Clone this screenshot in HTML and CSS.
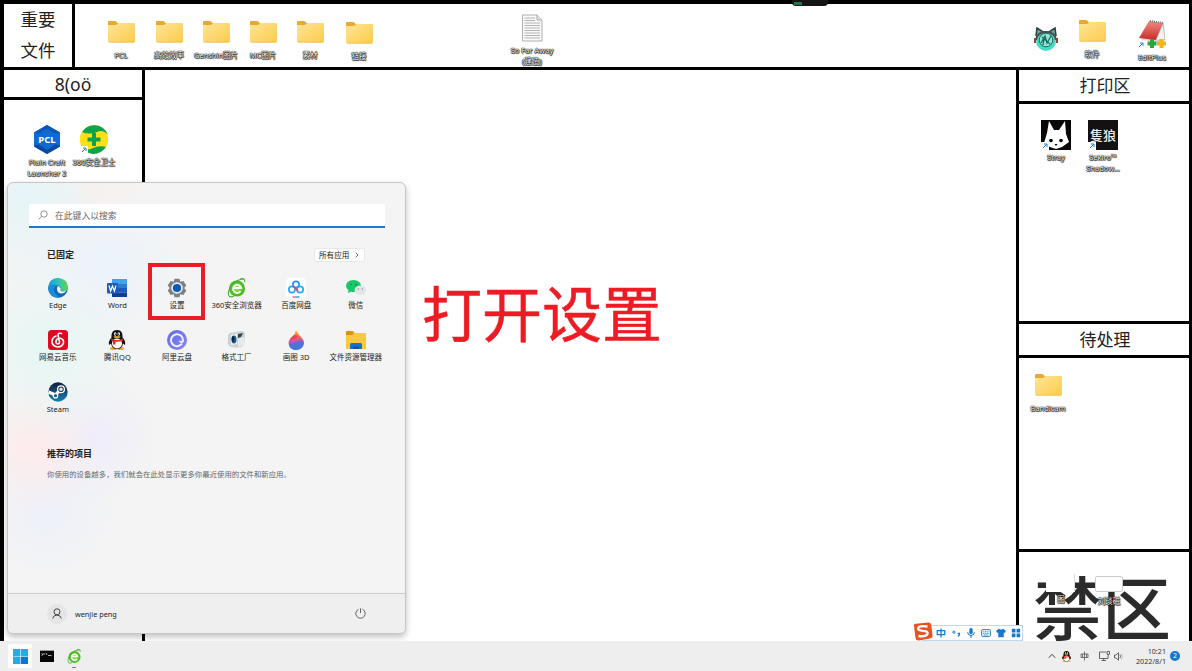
FILE: index.html
```html
<!DOCTYPE html>
<html lang="zh-CN">
<head>
<meta charset="utf-8">
<title>桌面</title>
<link rel="stylesheet" href="styles.css">
</head>
<body>
<svg class="defs" width="0" height="0" aria-hidden="true">
  <defs>
    <linearGradient id="gFolder" x1="0" y1="0" x2="1" y2="1"><stop offset="0" stop-color="#ffe596"/><stop offset="1" stop-color="#fccb4c"/></linearGradient>
    <linearGradient id="gEdge" x1="0" y1="0" x2="1" y2="0"><stop offset="0" stop-color="#1c9bdc"/><stop offset=".5" stop-color="#2cc3b8"/><stop offset="1" stop-color="#64d44e"/></linearGradient>
    <linearGradient id="gPurple" x1="0" y1="0" x2="1" y2="1"><stop offset="0" stop-color="#5d6ceb"/><stop offset="1" stop-color="#8d85f3"/></linearGradient>
    <linearGradient id="gDrop" x1="0" y1="0" x2="0" y2="1"><stop offset="0" stop-color="#ffd02e"/><stop offset=".3" stop-color="#fb6a3c"/><stop offset=".6" stop-color="#c24fc8"/><stop offset="1" stop-color="#2a8fe8"/></linearGradient>
    <linearGradient id="gSteam" x1="0" y1="0" x2="0" y2="1"><stop offset="0" stop-color="#141a3a"/><stop offset="1" stop-color="#1684b8"/></linearGradient>
    <linearGradient id="gRed" x1="0" y1="0" x2="0" y2="1"><stop offset="0" stop-color="#f08a80"/><stop offset="1" stop-color="#c9292b"/></linearGradient>
    <radialGradient id="gGreen"><stop offset="0" stop-color="#9be04a"/><stop offset="1" stop-color="#41b51f"/></radialGradient>
    <symbol id="folder" viewBox="0 0 27 22">
      <path d="M1 0H7Q8.500 0 10 2.500H14V8H0V1Q0 0 1 0Z" fill="#e9a82f"/>
      <path d="M0 4H8L10.500 2H26Q27 2 27 3V20.500Q27 21.500 26 21.500H1Q0 21.500 0 20.500Z" fill="url(#gFolder)"/>
      <path d="M1 21.200H26" stroke="#e8b33e" stroke-width=".6"/>
    </symbol>
    <symbol id="link" viewBox="0 0 8 8"><path d="M0 0H8V8H0Z" fill="#fff"/><path d="M2 6L5.800 2.200M3 2H6V5" stroke="#2484cf" fill="none"/></symbol>
    <symbol id="ie360" viewBox="0 0 20 20">
      <circle cx="10" cy="10.500" r="8" fill="url(#gGreen)"/>
      <path d="M13.500 13A4 4 0 1 1 14 10H6.500" fill="none" stroke="#f6fff0" stroke-width="2"/>
      <path d="M17.500 1Q10 .5 4 8Q-.5 15 2.500 18.500Q4 19.500 7 18M13 1Q18.500-.5 17.500 4" fill="none" stroke="#4aae38" stroke-width="1.100"/>
    </symbol>
    <symbol id="qq" viewBox="0 0 20 20">
      <ellipse cx="6.500" cy="18.500" rx="3.500" ry="1.500" fill="#f6a51b"/><ellipse cx="13.500" cy="18.500" rx="3.500" ry="1.500" fill="#f6a51b"/>
      <path d="M10 0C5.500 0 4.200 3.500 4.500 7.500Q1 11 2 15L4 13.500Q5 19 10 19Q15 19 16 13.500L18 15Q19 11 15.500 7.500C15.800 3.500 14.500 0 10 0Z" fill="#111"/>
      <ellipse cx="10" cy="13.500" rx="5" ry="5" fill="#fff"/>
      <ellipse cx="8.200" cy="4" rx="1.200" ry="1.700" fill="#fff"/><ellipse cx="11.800" cy="4" rx="1.200" ry="1.700" fill="#fff"/>
      <circle cx="8.500" cy="4.200" r=".6"/><circle cx="11.500" cy="4.200" r=".6"/>
      <ellipse cx="10" cy="7" rx="3.400" ry="1.100" fill="#f6a51b"/>
      <path d="M4 8.500Q10 11.500 16 8.500V10.500Q12 12.300 8.500 11.700V14.500H6V11Q4.500 10.600 4 10Z" fill="#e62a26"/>
    </symbol>
  </defs>
</svg>

<div class="screen">
  <div class="wallpaper">
    <div class="top-row">
      <div class="cell important"><span>重要</span><span>文件</span></div>
      <div class="cell"></div>
    </div>
    <div class="columns">
      <div class="column">
        <div class="cell heading heading-left">8(oö</div>
        <div class="cell grow"></div>
      </div>
      <div class="cell middle"></div>
      <div class="column">
        <div class="cell heading heading-right">打印区</div>
        <div class="cell print"></div>
        <div class="cell heading heading-right">待处理</div>
        <div class="cell pending"></div>
        <div class="cell forbidden">禁区</div>
      </div>
    </div>
  </div>

  <div class="recorder"><i></i></div>

  <!-- Freely placed desktop shortcuts -->
  <div class="shortcut" style="left:91px;top:21px"><svg class="folder"><use href="#folder"/></svg><b class="low">PCL</b></div>
  <div class="shortcut" style="left:139px;top:21px"><svg class="folder"><use href="#folder"/></svg><b class="low">高效效率</b></div>
  <div class="shortcut" style="left:186px;top:21px"><svg class="folder"><use href="#folder"/></svg><b class="low">Genshin图片</b></div>
  <div class="shortcut" style="left:233px;top:21px"><svg class="folder"><use href="#folder"/></svg><b class="low">MC图片</b></div>
  <div class="shortcut" style="left:280px;top:21px"><svg class="folder"><use href="#folder"/></svg><b class="low">素材</b></div>
  <div class="shortcut" style="left:329px;top:22px"><svg class="folder"><use href="#folder"/></svg><b class="low">链接</b></div>
  <div class="shortcut" style="left:502px;top:14px">
    <svg width="21" height="28" viewBox="0 0 21 28"><path d="M.5 1H15L20 6V27H.5Z" fill="#fafafa" stroke="#999" stroke-width=".8"/><path d="M15 1V6H20" fill="#e5e5e5" stroke="#999" stroke-width=".8"/><path d="M2.500 4H13M2.500 6.500H13M2.500 9H18M2.500 11.500H18M2.500 14H18M2.500 16.500H18M2.500 19H18M2.500 21.500H18M2.500 24H18" stroke="#aaa" stroke-width=".9"/></svg>
    <b class="file">So Far Away<br>(建造)</b>
  </div>
  <div class="shortcut" style="left:1016px;top:27px">
    <svg width="24" height="25" viewBox="0 0 24 25"><circle cx="12" cy="14" r="10" fill="#45dcc2"/><path d="M2 9L3 1L9 5H15L21 1L22 9" fill="#46bda6" stroke="#383d42" stroke-width="1.600"/><path d="M2 13Q3 5 12 5Q21 5 22 13" fill="none" stroke="#504d50" stroke-width="2"/><circle cx="12" cy="13" r="6.800" fill="#8de9d4" stroke="#176a68"/><path d="M7 16L11 9L13 16L17 9M8 10L16 17M9 18L10 12" fill="none" stroke="#216765" stroke-width="1.300"/><path d="M1 11V16M23 11V16" stroke="#8c4538" stroke-width="2"/></svg>
  </div>
  <div class="shortcut" style="left:1062px;top:20px"><svg class="folder"><use href="#folder"/></svg><b class="low">软件</b></div>
  <div class="shortcut" style="left:1122px;top:20px">
    <svg width="30" height="30" viewBox="0 0 30 30"><path d="M12 1L27 3L28 20L22 22L4 20Z" fill="#d7d9dc"/><path d="M12 1L26 3L19 20L2 18Z" fill="url(#gRed)"/><path d="M13 1L27 3" stroke="#777" stroke-width="2" stroke-dasharray="1 1"/><path d="M26 4L19 20L28 20Z" fill="#f4f4f4" stroke="#999" stroke-width=".5"/><path d="M15 19V28M10.500 23.500H19.500" stroke="#2ca63a" stroke-width="4"/><path d="M24.500 19V28M20 23.500H29" stroke="#f0b51c" stroke-width="4"/><use href="#link" x="0" y="21" width="8" height="8"/></svg>
    <b class="tight">EditPlus</b>
  </div>
  <div class="shortcut" style="left:17px;top:124px">
    <svg width="30" height="31" viewBox="0 0 30 31"><path d="M15 1L28 8.500V22.500L15 30L2 22.500V8.500Z" fill="#0d6bd3"/><path d="M15 1L28 8.500L24 10L15 5L6 10L2 8.500Z" fill="#0b57b5"/><path d="M2 22.500L6 20L15 26L24 20L28 22.500L15 30Z" fill="#094a9e"/><text x="15" y="19" class="pcl">PCL</text></svg>
    <b>Plain Craft<br>Launcher 2</b>
  </div>
  <div class="shortcut" style="left:64px;top:124px">
    <svg width="30" height="31" viewBox="0 0 30 31"><circle cx="15" cy="15.500" r="14.200" fill="#ffdf16"/><path d="M3 8Q8 1 15 1.200Q25 1 29 11Q24 5 18 8Q11 11 3 8Z" fill="#0ca34a"/><path d="M1.500 21Q8 28 14 24Q20 21 27 23Q22 30 14 30Q5 29 1.500 21Z" fill="#0ca34a"/><path d="M15 9V22M8.500 15.500H21.500" stroke="#0ca34a" stroke-width="4"/><use href="#link" x="1" y="22" width="8" height="8"/></svg>
    <b>360安全卫士</b>
  </div>
  <div class="shortcut" style="left:1026px;top:120px">
    <svg width="30" height="30" viewBox="0 0 30 30"><path d="M0 0H30V30H0Z" fill="#080808"/><path d="M8 1L13 10H18L24 1L25 14L28 22L21 27L15 29L9 27L3 23L6 13Z" fill="#fff"/><circle cx="10" cy="20.500" r="1.800"/><circle cx="20" cy="20.500" r="1.800"/><path d="M13.500 24H16.500L15 26Z"/><use href="#link" x="0" y="22" width="8" height="8"/></svg>
    <b>Stray</b>
  </div>
  <div class="shortcut" style="left:1073px;top:120px">
    <svg width="30" height="30" viewBox="0 0 30 30"><path d="M0 0H30V30H0Z" fill="#131111"/><text x="15" y="20" class="sekiro">隻狼</text><use href="#link" x="0" y="22" width="8" height="8"/></svg>
    <b>Sekiro™<br>Shadow...</b>
  </div>
  <div class="shortcut" style="left:1018px;top:374px"><svg class="folder"><use href="#folder"/></svg><b class="low">Bandicam</b></div>
  <div class="shortcut" style="left:1031px;top:574px"><div class="blank-icon"></div><b class="tight">图</b></div>
  <div class="shortcut" style="left:1079px;top:576px"><div class="disk-icon"></div><b class="disk-label">刘琰磁</b></div>

  <div class="caption">打开设置</div>

  <div class="ime">
    <svg class="sogou" width="20" height="19" viewBox="0 0 20 19"><path d="M1 4Q0 2 3 1.800L15 .5Q18 0 18.300 3L19.500 13Q20 16 17 16.500L6 18.500Q3 19 2.500 16Z" fill="#e95322"/><path d="M14.500 4.500Q6 3 5 6.500Q5 8.500 10 8.800Q15.500 9 14.500 12Q13 15 5.500 14" fill="none" stroke="#fff" stroke-width="2.300"/></svg>
    <svg viewBox="0 0 12 12"><path d="M1.500 3H10.500V7.800H1.500ZM6 .5V11.500" fill="none" stroke="#1677d2" stroke-width="1.500"/></svg>
    <svg viewBox="0 0 12 12"><circle cx="3.500" cy="5" r="1.300" fill="none" stroke="#1677d2" stroke-width="1.200"/><path d="M8 6.500H10V8L8.500 10" stroke="#1677d2" fill="none" stroke-width="1.600"/></svg>
    <svg viewBox="0 0 12 12"><rect x="4" y="0" width="4" height="7.500" rx="2" fill="#1677d2"/><path d="M2 5Q2 9 6 9Q10 9 10 5M6 9V12" stroke="#1677d2" fill="none" stroke-width="1.200"/></svg>
    <svg viewBox="0 0 12 12"><rect x=".8" y="2" width="10.400" height="8" rx="1" fill="none" stroke="#1677d2" stroke-width="1.200"/><path d="M2.500 4.500H9.500M2.500 6.500H9.500M3.500 8.300H8.500" stroke="#1677d2" stroke-dasharray="1.500 .6"/></svg>
    <svg viewBox="0 0 12 12"><path d="M3.500 1Q6 3 8.500 1L12 3.500L10.500 6L9.300 5.500V11H2.700V5.500L1.500 6L0 3.500Z" fill="#1677d2"/></svg>
    <svg viewBox="0 0 12 12"><path d="M1 1H5.300V5.300H1ZM6.700 1H11V5.300H6.700ZM1 6.700H5.300V11H1ZM6.700 6.700H11V11H6.700Z" fill="#1677d2"/></svg>
  </div>

  <div class="start-menu">
    <div class="menu-body">
      <div class="search">
        <svg width="10" height="10" viewBox="0 0 10 10"><circle cx="6" cy="4" r="3.200" fill="none" stroke="#777" stroke-width=".8"/><path d="M3.700 6.300L.6 9.400" stroke="#777" stroke-width=".8"/></svg>
        <span>在此键入以搜索</span>
      </div>
      <div class="section-head"><h2>已固定</h2><div class="all-apps"><span>所有应用</span><svg width="4" height="6" viewBox="0 0 4 6"><path d="M.8 .8L3 3L.8 5.200" fill="none" stroke="#555" stroke-width=".9"/></svg></div></div>
      <div class="apps">
        <div class="app"><svg viewBox="0 0 20 20"><circle cx="10" cy="10" r="9.800" fill="#1267bd"/><path d="M.3 9Q1 .3 10 .2Q19.500 .5 19.800 9Q19.500 13.500 14.500 13.500Q11.500 13.200 12.500 11.500Q13.500 8.500 9.500 7.200Q4 5.800 .3 9Z" fill="url(#gEdge)"/><path d="M.3 9Q4 5.800 9.500 7.200Q4 9.500 7 15Q9 18 12 19.500Q3 21 .3 12Z" fill="#198cda"/><path d="M9.500 8Q13.200 9 12.500 11.500Q11.500 13.200 14.500 13.500Q17 13.500 18.500 12Q17 15.500 13 15.500Q7.500 14.500 9.500 8Z" fill="#f4f8fa"/></svg><span>Edge</span></div>
        <div class="app"><svg viewBox="0 0 20 20"><path d="M5 1H20V7H5Z" fill="#41a5ee"/><path d="M5 6H20V10H5Z" fill="#2b7cd3"/><path d="M5 10H20V14.500H5Z" fill="#185abd"/><path d="M5 14.500H20V19H5Z" fill="#103f91"/><rect x="0" y="5" width="11" height="10.500" rx="1" fill="#185abd"/><path d="M2 7.500L3.600 13L5.500 8L7.400 13L9 7.500" stroke="#fff" stroke-width="1.300" fill="none"/></svg><span>Word</span></div>
        <div class="app"><svg viewBox="0 0 20 20"><path d="M7.500 .7H12.500L13.300 3.800L16.400 2.900L19.300 7.500L17.200 10L19.300 12.500L16.400 17.100L13.300 16.200L12.500 19.300H7.500L6.700 16.200L3.600 17.100L.7 12.500L2.800 10L.7 7.500L3.600 2.900L6.700 3.800Z" fill="#7b8086"/><circle cx="10" cy="10" r="5.800" fill="#ebeff4"/><circle cx="10" cy="10" r="4.100" fill="#0c5bae"/></svg><span>设置</span></div>
        <div class="app"><svg viewBox="0 0 20 20"><use href="#ie360"/></svg><span>360安全浏览器</span></div>
        <div class="app"><svg viewBox="0 0 20 20"><rect width="20" height="20" rx="4" fill="#fff"/><circle cx="10" cy="6.500" r="3.100" fill="none" stroke="#189cf2" stroke-width="1.700"/><circle cx="5.900" cy="11.500" r="3.100" fill="none" stroke="#26aaf5" stroke-width="1.700"/><circle cx="14.100" cy="11.500" r="3.100" fill="none" stroke="#26aaf5" stroke-width="1.700"/><path d="M7 8Q9 10 12 13" stroke="#f04452" stroke-width="1.700" fill="none"/><path d="M6.500 19H10" stroke="#f36070" stroke-width="1.400"/><path d="M10 19H13.500" stroke="#2698ee" stroke-width="1.400"/></svg><span>百度网盘</span></div>
        <div class="app"><svg viewBox="0 0 20 20"><path d="M7.500 2C3 2 0 4.800 0 8Q0 10.500 2.500 12.500L2 15L5 13.700Q13 15 15 9C15.500 5 12 2 7.500 2Z" fill="#18c86a"/><path d="M14 7.500Q19.700 7.800 20 12Q20 14 18.300 15.500L18.500 17.500L16.500 16.500Q9 17.500 8.500 12Q9 8 14 7.500Z" fill="#e4e5e6"/><circle cx="5" cy="6.500" r=".8" fill="#07793a"/><circle cx="10" cy="6.500" r=".8" fill="#07793a"/><circle cx="12.300" cy="11" r=".7" fill="#888"/><circle cx="16.300" cy="11" r=".7" fill="#888"/></svg><span>微信</span></div>
        <div class="app"><svg viewBox="0 0 20 20"><rect width="20" height="20" rx="3.500" fill="#dd0a22"/><path d="M13.500 3.500Q10 2.500 10 5L11.500 12Q11.500 14 9.800 14Q7.500 13.500 8 11Q9 8.200 12 8.300Q16 9 15.500 13Q14 17 9.500 17Q4 16 4 11.500Q4.200 7.500 8 6" fill="none" stroke="#fff" stroke-width="1.600" stroke-linecap="round"/></svg><span>网易云音乐</span></div>
        <div class="app"><svg viewBox="0 0 20 20"><use href="#qq"/></svg><span>腾讯QQ</span></div>
        <div class="app"><svg viewBox="0 0 20 20"><circle cx="10" cy="10" r="10" fill="url(#gPurple)"/><path d="M14.500 14.200A6 6 0 1 1 16 10.500Q15.500 13 13 11.500" fill="none" stroke="#f4f2ff" stroke-width="2" stroke-linecap="round"/></svg><span>阿里云盘</span></div>
        <div class="app"><svg viewBox="0 0 20 20"><path d="M1 5Q2 2 6 2.500L14 1Q18 1 18 5L17 15Q14 18 9 17.500Q3 18 1 14Z" fill="#cbd0d4"/><path d="M4 5L10 4V14L4 15Z" fill="#f2f4f5"/><ellipse cx="7" cy="9.500" rx="2.500" ry="4" fill="#176093"/><ellipse cx="6" cy="9" rx="1.400" ry="3" fill="#0a263f"/><path d="M11 4L16 3L14 7L11 8Z" fill="#3c4043"/><path d="M11 9L17 7V15L11 17Z" fill="#e8eaeb"/></svg><span>格式工厂</span></div>
        <div class="app"><svg viewBox="0 0 20 20"><path d="M10 0Q12 4 15 7Q19 11 17.500 15Q15 20 10 20Q3 20 2.500 13Q3 9 7 6Q9 4 10 0Z" fill="url(#gDrop)"/><path d="M4 9Q10 10 12 6L8 5Z" fill="#e5475a"/><path d="M3 14Q9 14 12 11Q16 9 18 13Q17 20 10 20Q5 20 3 14Z" fill="#3976dd" opacity=".7"/></svg><span>画图 3D</span></div>
        <div class="app"><svg viewBox="0 0 20 20"><path d="M0 2Q0 1 1 1H7L9 3H19Q20 3 20 4V18Q20 19 19 19H1Q0 19 0 18Z" fill="#fdc83b"/><path d="M0 2Q0 1 1 1H7L8 3L6 5H0Z" fill="#d99317"/><path d="M4 19V14.500Q4 13 5.500 13H14.500Q16 13 16 14.500V19Z" fill="#1772c4"/><path d="M7 19V16.500H13V19" fill="#0c559d"/></svg><span>文件资源管理器</span></div>
        <div class="app"><svg viewBox="0 0 20 20"><circle cx="10" cy="10" r="9.700" fill="url(#gSteam)"/><path d="M.5 10L7.500 13L11.500 8.500" fill="none" stroke="#fff" stroke-width="3.300"/><circle cx="13" cy="7.200" r="3.400" fill="#17284c" stroke="#fff" stroke-width="1.300"/><circle cx="13" cy="7.200" r="1.800" fill="#dce7ef"/><circle cx="7.500" cy="13.700" r="2.200" fill="#1c6595" stroke="#fff" stroke-width="1.200"/></svg><span>Steam</span></div>
      </div>
      <h2 class="recommended">推荐的项目</h2>
      <p class="hint">你使用的设备越多，我们就会在此处显示更多你最近使用的文件和新应用。</p>
    </div>
    <div class="menu-foot">
      <div class="user"><div class="avatar"><svg width="10" height="11" viewBox="0 0 10 11"><circle cx="5" cy="3.800" r="3" fill="none" stroke="#444"/><path d="M.7 10.500Q1.500 7 5 7Q8.500 7 9.300 10.500" fill="none" stroke="#444"/></svg></div><span>wenjie peng</span></div>
      <svg width="11" height="11" viewBox="0 0 11 11"><path d="M3.500 1.300A4.700 4.700 0 1 0 7.500 1.300M5.500 .3V5" fill="none" stroke="#555" stroke-width=".9"/></svg>
    </div>
  </div>
  <div class="highlight"></div>

  <div class="taskbar">
    <div class="pinned">
      <div class="task active"><svg width="15" height="15" viewBox="0 0 15 15"><path d="M0 0H7.200V7.200H0ZM7.800 0H15V7.200H7.800ZM0 7.800H7.200V15H0Z" fill="#28aae8"/><path d="M7.800 7.800H15V15H7.800Z" fill="#0878d0"/></svg></div>
      <div class="task"><svg width="14" height="12" viewBox="0 0 14 12"><path d="M0 0H14V12H0Z" fill="#080808"/><path d="M0 0H14V1H0Z" fill="#999"/><path d="M1.500 3.500L3 4.500L1.500 5.500M4 3V5M6 3L7 5M8 5.500H11.500" fill="none" stroke="#ddd" stroke-width=".8"/></svg></div>
      <div class="task running"><svg width="15" height="15" viewBox="0 0 20 20"><use href="#ie360"/></svg></div>
    </div>
    <div class="tray">
      <svg width="8" height="6" viewBox="0 0 8 6"><path d="M.8 4.800L4 1.300L7.200 4.800" fill="none" stroke="#333" stroke-width=".9"/></svg>
      <svg class="tray-qq" width="11" height="11" viewBox="0 0 20 20"><use href="#qq"/></svg>
      <svg class="tray-ime" width="9" height="10" viewBox="0 0 9 10"><path d="M1 3H8V6.500H1ZM4.500 .5V9.500M2.500 3V6.500M6.500 3V6.500" fill="none" stroke="#555" stroke-width=".8"/></svg>
      <svg class="tray-net" width="11" height="10" viewBox="0 0 11 10"><path d="M7 1H.5V7.500H9V5M2.500 9.500H7M4.700 7.500V9.500M8 .5H10.500V3.300H8ZM9.200 3.300V5" fill="none" stroke="#444" stroke-width=".8"/></svg>
      <svg class="tray-vol" width="9" height="9" viewBox="0 0 9 9"><path d="M.5 3H2L4.500 .8V8.200L2 6H.5ZM6 2.800Q7 4.500 6 6.200" fill="none" stroke="#444" stroke-width=".8"/><path d="M7.500 1.500Q9 4.500 7.500 7.500" fill="none" stroke="#aaa" stroke-width=".7"/></svg>
      <div class="clock"><span>10:21</span><span>2022/8/1</span></div>
      <div class="badge">2</div>
    </div>
  </div>
</div>
</body>
</html>
```
FILE: styles.css
```css
* { box-sizing: border-box; }
body {
  margin: 0;
  overflow: hidden;
  font-family: "Noto Sans", "Noto Sans CJK SC", sans-serif;
  color: #222;
}
svg { display: block; flex: none; }
.defs { position: absolute; }
.screen {
  position: relative;
  width: 1192px;
  height: 671px;
  display: flex;
  flex-direction: column;
  overflow: hidden;
}

/* Wallpaper divided into labelled zones */
.wallpaper {
  height: 641px;
  padding: 4px 3px 0 4px;
  display: flex;
  flex-direction: column;
  gap: 3px;
  background: #000;
}
.top-row { height: 63px; display: grid; grid-template-columns: 68px 1fr; gap: 3px; }
.columns { flex: 1; min-height: 0; display: grid; grid-template-columns: 138px 1fr 170px; gap: 3px; }
.column { display: flex; flex-direction: column; gap: 3px; min-height: 0; }
.cell { background: #fff; }
.grow { flex: 1; }
.important {
  display: flex;
  flex-direction: column;
  align-items: center;
  font-size: 17.5px;
  line-height: 31px;
}
.heading { display: flex; align-items: center; justify-content: center; font-size: 17px; line-height: 24px; flex: none; }
.heading-left { height: 27px; font-size: 17.5px; }
.heading-right { height: 31px; padding-left: 2px; }
.print { height: 217px; }
.pending { height: 191px; }
.forbidden {
  flex: 1;
  min-height: 0;
  padding: 16px 0 0 14px;
  font: 500 69px/74px "Noto Sans CJK SC", sans-serif;
  color: #2b2b2b;
  white-space: nowrap;
}
.recorder {
  position: absolute;
  left: 792px;
  top: 0;
  width: 36px;
  height: 6px;
  border-radius: 0 0 4px 4px;
  padding: 2px;
  background: #151515;
}
.recorder i { display: block; width: 8px; height: 3px; background: #23764a; }

/* Desktop shortcuts */
.shortcut { position: absolute; width: 60px; display: flex; flex-direction: column; align-items: center; }
.folder { width: 27px; height: 22px; }
.shortcut b {
  margin-top: 2px;
  font-size: 7.5px;
  line-height: 11px;
  font-weight: 400;
  text-align: center;
  white-space: nowrap;
  color: #fff;
  text-shadow: 0 0 1px #000, 0 0 1px #000, 0 0 1px #000, .5px .5px 1px #000;
}
.shortcut .low { margin-top: 6.5px; }
.shortcut .file { margin-top: 3px; }
.shortcut .tight { margin-top: 2px; }
.pcl { font: 700 9.5px "Noto Sans", sans-serif; fill: #fff; text-anchor: middle; }
.sekiro { font: 500 13px "Noto Sans CJK SC", sans-serif; fill: #eee; text-anchor: middle; }
.blank-icon { width: 29px; height: 18px; margin-left: -1px; background: #fff; border-right: 1px solid #ddd; }
.disk-icon { width: 28px; height: 16px; border: 1px solid #ccc; border-radius: 2px; background: #fff; }
.shortcut .disk-label { margin-top: 4px; }

.caption {
  position: absolute;
  left: 422px;
  top: 267px;
  font: 400 60px/88px "Noto Sans CJK SC", sans-serif;
  color: #ed1c24;
  -webkit-text-stroke: .5px #ed1c24;
  white-space: nowrap;
}

/* Floating input-method bar */
.ime {
  position: absolute;
  left: 922px;
  top: 625px;
  width: 101px;
  height: 16px;
  padding: 0 1px 0 13px;
  display: flex;
  align-items: center;
  justify-content: space-between;
  background: #fff;
  border: 1px solid #bcd9ef;
}
.ime svg { width: 10px; height: 10px; }
.ime .sogou { position: absolute; left: -10px; top: -4px; width: 20px; height: 19px; }

/* Start menu */
.start-menu {
  position: absolute;
  left: 7px;
  top: 182px;
  width: 399px;
  height: 452px;
  display: flex;
  flex-direction: column;
  border: 1px solid #c6c6c6;
  border-radius: 6px;
  overflow: hidden;
  box-shadow: 0 3px 6px rgba(0, 0, 0, .25);
  background:
    radial-gradient(circle at 20px 15px, #e6f4f8, transparent 90px),
    radial-gradient(circle at 80px 5px, #f9f0ec, transparent 60px),
    radial-gradient(circle at 100px 80px, #ebf3fb, transparent 80px),
    radial-gradient(circle at 40px 165px, #e6f7f4, transparent 90px),
    radial-gradient(circle at 25px 265px, #fdebeb, transparent 70px),
    radial-gradient(circle at 85px 255px, #eeedfb, transparent 65px),
    radial-gradient(circle at 40px 325px, #edf0fb, transparent 70px),
    #f4f4f4;
}
.menu-body { flex: 1; padding: 21px 20px 0 21px; }
.search {
  width: 356px;
  height: 24px;
  display: flex;
  align-items: center;
  gap: 7px;
  padding-left: 9px;
  background: #fff;
  border-bottom: 2px solid #2278c8;
  font-size: 8.8px;
  color: #666;
}
.section-head {
  height: 14px;
  margin: 20px 20px 0 18px;
  display: flex;
  align-items: center;
  justify-content: space-between;
}
h2 { margin: 0; font-size: 9px; line-height: 14px; font-weight: 600; }
.all-apps {
  width: 51px;
  height: 14px;
  display: flex;
  align-items: center;
  justify-content: space-between;
  padding: 0 5px 0 4px;
  background: #fdfdfd;
  border: 1px solid #e8e8e8;
  border-radius: 2px;
  font-size: 7.6px;
  line-height: 10px;
}
.all-apps span { padding-bottom: 1px; }
.apps {
  margin: 16px 0 0 -1px;
  width: 358px;
  display: grid;
  grid-template-columns: repeat(6, 59.6px);
  grid-auto-rows: 52px;
}
.app { display: flex; flex-direction: column; align-items: center; font-size: 7.5px; line-height: 12px; white-space: nowrap; }
.app svg { width: 20px; height: 20px; margin-bottom: 1px; }
.recommended { margin: 13px 0 0 18px; }
.hint { margin: 7px 0 0 18px; font-size: 7.4px; line-height: 12px; color: #666; white-space: nowrap; }
.menu-foot {
  height: 40px;
  padding: 0 39px;
  display: flex;
  align-items: center;
  justify-content: space-between;
  background: #efefef;
  border-top: 1px solid #ccc;
}
.user { display: flex; align-items: center; gap: 8px; font-size: 7.3px; }
.avatar { width: 20px; height: 20px; border-radius: 50%; background: #e5e5e5; display: flex; align-items: center; justify-content: center; }
.highlight { position: absolute; left: 148px; top: 263px; width: 57px; height: 57px; border: 4px solid #e81e25; }

/* Taskbar */
.taskbar {
  position: relative;
  height: 30px;
  display: flex;
  justify-content: space-between;
  background: #eee;
}
.pinned { display: flex; align-items: center; gap: 3px; padding-left: 8px; }
.task { position: relative; width: 24px; height: 24px; display: flex; align-items: center; justify-content: center; }
.task.active { background: #fcfcfc; border-radius: 2px; }
.task.running::after { content: ""; position: absolute; bottom: 0; width: 4px; height: 1.5px; background: #777; border-radius: 1px; }
.tray { display: flex; align-items: center; padding-right: 12px; }
.tray-qq { margin-left: 5px; }
.tray-ime { margin-left: 8px; }
.tray-net { margin-left: 10px; }
.tray-vol { margin-left: 4px; }
.clock { width: 43px; display: flex; flex-direction: column; align-items: flex-end; font-size: 7.2px; line-height: 10px; color: #333; }
.badge {
  width: 10px;
  height: 10px;
  margin-left: 4px;
  border-radius: 50%;
  background: #0f78cf;
  color: #fff;
  font-size: 7px;
  line-height: 10px;
  text-align: center;
}
```
